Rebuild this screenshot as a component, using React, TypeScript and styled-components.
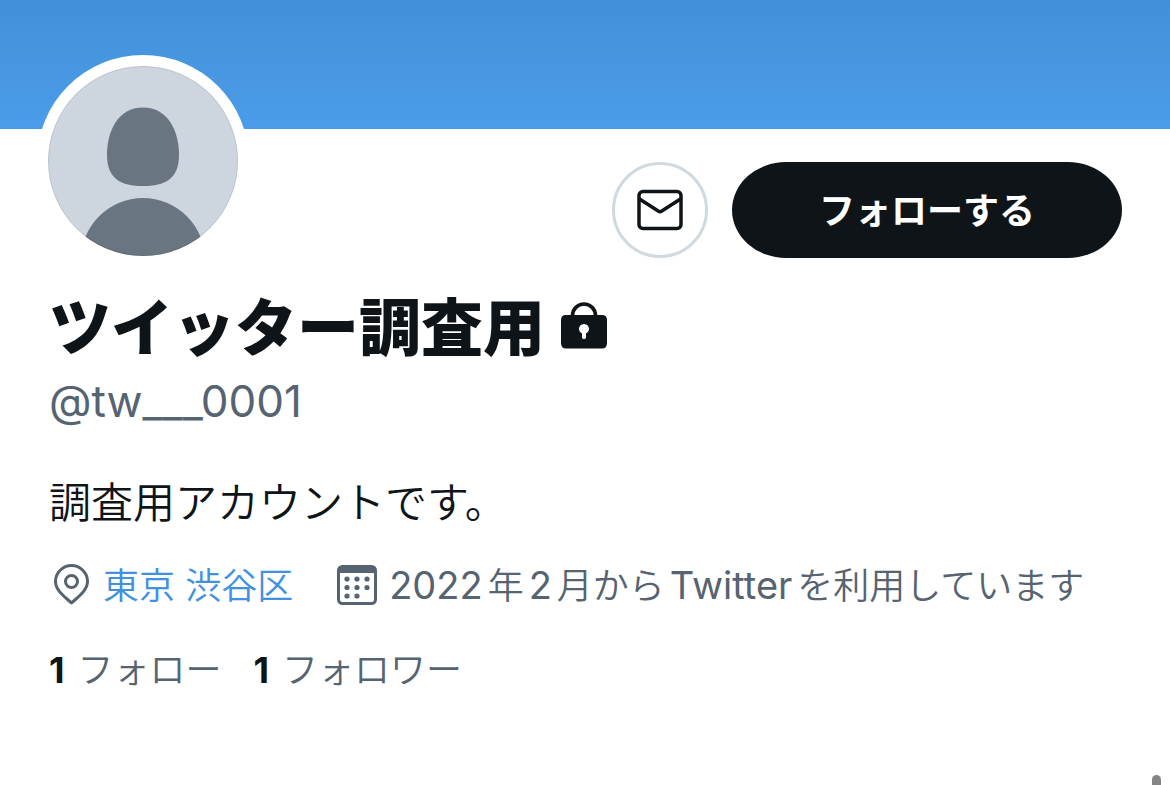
import React from "react";
import styled, { createGlobalStyle } from "styled-components";

const ink = "#0f1419";
const muted = "#566370";
const blue = "#4191df";

const GlobalStyle = createGlobalStyle`
  *, *::before, *::after { box-sizing: border-box; }
  body {
    margin: 0;
    background: #fff;
    color: ${ink};
    font-family: Inter, "Noto Sans CJK JP", sans-serif;
    overflow-x: hidden;
  }
  h1, p { margin: 0; padding: 0; }
`;

const Page = styled.main`
  position: relative;
  min-height: 100vh;
`;

const Banner = styled.div`
  height: 129px;
  background: linear-gradient(#4290d7, #4b9cea);
`;

const Profile = styled.section`
  padding: 0 48px;
`;

const TopRow = styled.div`
  display: flex;
  justify-content: space-between;
  align-items: flex-end;
  margin-top: -74px;
`;

const Avatar = styled.svg`
  display: block;
  width: 212px;
  height: 212px;
  margin-left: -11px;
`;

const Actions = styled.div`
  display: flex;
  gap: 24px;
  padding-bottom: 9px;
`;

const MessageButton = styled.button`
  display: flex;
  align-items: center;
  justify-content: center;
  width: 96px;
  height: 96px;
  padding: 0;
  border: 3px solid #cfd9de;
  border-radius: 50%;
  background: #fff;
`;

const FollowButton = styled.button`
  height: 96px;
  padding: 0 87px 4px;
  border: 0;
  border-radius: 54px / 48px;
  background: ${ink};
  color: #fff;
  font: inherit;
  font-size: 36px;
  font-weight: 600;
`;

const Details = styled.div`
  padding-left: 1px;
`;

const NameRow = styled.div`
  display: flex;
  align-items: center;
  gap: 16px;
  margin-top: 22px;
`;

const Name = styled.h1`
  font-size: 62px;
  line-height: 80px;
  font-weight: 800;
`;

const Handle = styled.p`
  margin-top: 2px;
  color: ${muted};
  font-size: 44px;
  line-height: 60px;
  font-weight: 400;
`;

const Bio = styled.p`
  margin-top: 42px;
  font-size: 42px;
  line-height: 60px;
  font-weight: 350;
`;

const MetaRow = styled.div`
  display: flex;
  gap: 44px;
  margin-top: 22px;
  color: ${muted};
  font-size: 36px;
  line-height: 60px;
`;

const MetaItem = styled.span`
  display: flex;
  align-items: center;
  gap: 12px;
  white-space: nowrap;
`;

const Place = styled.a`
  color: ${blue};
  text-decoration: none;
  font-weight: 350;
`;

const Joined = styled.span`
  display: flex;
  align-items: baseline;
  gap: 5px;
`;

const Japanese = styled.span`
  font-weight: 350;
`;

const Latin = styled.span`
  font-size: 38px;
`;

const Stats = styled.div`
  display: flex;
  gap: 32px;
  margin-top: 24px;
  font-size: 36px;
  line-height: 60px;
`;

const Stat = styled.a`
  display: flex;
  gap: 13px;
  color: ${muted};
  font-weight: 350;
  text-decoration: none;

  strong {
    color: ${ink};
    font-weight: 700;
  }
`;

const ScrollThumb = styled.div`
  position: absolute;
  right: 9px;
  bottom: 0;
  width: 9px;
  height: 10px;
  border-radius: 5px 5px 0 0;
  background: #858585;
`;

export default function App() {
  return (
    <Page>
      <GlobalStyle />
      <Banner />
      <Profile>
        <TopRow>
          <Avatar viewBox="0 0 212 212" role="img" aria-label="プロフィール画像">
            <defs>
              <clipPath id="face"><circle cx="106" cy="106" r="95" /></clipPath>
            </defs>
            <circle cx="106" cy="106" r="106" fill="#fff" />
            <g clipPath="url(#face)">
              <rect width="212" height="212" fill="#cdd5de" />
              <path d="M106 52.500C131 52.500 142 76 142 100C142 124 128 131 106 131C84 131 70 124 70 100C70 76 81 52.500 106 52.500Z" fill="#697682" />
              <circle cx="106" cy="205" r="62" fill="#697682" />
            </g>
            <circle cx="106" cy="106" r="94.500" fill="none" stroke="#000" strokeOpacity="0.080" />
          </Avatar>
          <Actions>
            <MessageButton type="button" aria-label="メッセージ">
              <svg width="48" height="42" viewBox="0 0 48 42" fill="none" stroke={ink} strokeWidth="3.500" strokeLinejoin="round" strokeLinecap="round">
                <rect x="3" y="2.500" width="42" height="37" rx="4" />
                <path d="M3.500 10L22.600 22.300Q24 23.200 25.400 22.300L44.500 10" />
              </svg>
            </MessageButton>
            <FollowButton type="button">フォローする</FollowButton>
          </Actions>
        </TopRow>
        <Details>
          <NameRow>
            <Name>ツイッター調査用</Name>
            <svg width="46" height="54" viewBox="0 0 46 54" role="img" aria-label="非公開アカウント">
              <path d="M11.500 15V13.500A11.500 11.500 0 0 1 34.500 13.500V15" fill="none" stroke={ink} strokeWidth="3.600" />
              <path fillRule="evenodd" fill={ink} d="M5 13H41Q46 13 46 18V41Q46 46.500 41 46.500H5Q0 46.500 0 41V18Q0 13 5 13ZM21 31.500V35.500Q21 37 23 37T25 35.500V31.500A5 5 0 1 0 21 31.500Z" />
            </svg>
          </NameRow>
          <Handle>@tw___0001</Handle>
          <Bio>調査用アカウントです。</Bio>
          <MetaRow>
            <MetaItem>
              <svg width="42" height="44" viewBox="1 1 42 44" fill="none" stroke={muted} strokeWidth="3" strokeLinejoin="round">
                <path d="M23.500 40C17 34 7.500 27.500 7.500 18.500A16 16 0 0 1 39.500 18.500C39.500 27.500 30 34 23.500 40Z" />
                <circle cx="23.500" cy="18.500" r="6" />
              </svg>
              <Place href="#place">東京 渋谷区</Place>
            </MetaItem>
            <MetaItem>
              <svg width="40" height="42" viewBox="0 0 40 42" fill={muted}>
                <rect x="1.500" y="1.500" width="37" height="37" rx="4" fill="none" stroke={muted} strokeWidth="3" />
                <path d="M1 8V4Q1 1 5 1H35Q39 1 39 4V8Z" />
                {[[10, 14], [20, 14], [30, 14], [10, 22.5], [20, 22.5], [30, 22.5], [10, 31], [20, 31]].map(([x, y]) => (
                  <circle key={`${x}-${y}`} cx={x} cy={y} r="2.600" />
                ))}
              </svg>
              <Joined>
                <Latin>2022</Latin>
                <Japanese>年</Japanese>
                <Latin>2</Latin>
                <Japanese>月から</Japanese>
                <Latin>Twitter</Latin>
                <Japanese>を利用しています</Japanese>
              </Joined>
            </MetaItem>
          </MetaRow>
          <Stats>
            <Stat href="#following"><strong>1</strong>フォロー</Stat>
            <Stat href="#followers"><strong>1</strong>フォロワー</Stat>
          </Stats>
        </Details>
      </Profile>
      <ScrollThumb />
    </Page>
  );
}
